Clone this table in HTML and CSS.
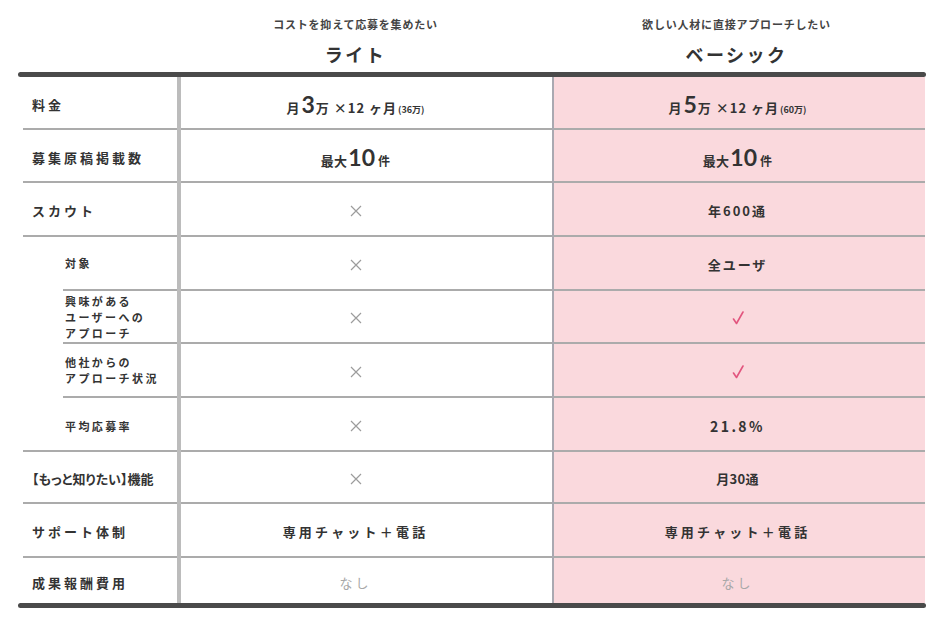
FILE: index.html
```html
<!DOCTYPE html>
<html lang="ja">
<head>
<meta charset="utf-8">
<title>プラン比較</title>
<link rel="stylesheet" href="styles.css">
</head>
<body>
<div class="wrap">
  <div class="head">
    <div class="h-light">
      <p class="sub">コストを抑えて応募を集めたい</p>
      <p class="plan">ライト</p>
    </div>
    <div class="h-basic">
      <p class="sub">欲しい人材に直接アプローチしたい</p>
      <p class="plan">ベーシック</p>
    </div>
  </div>
  <div class="bar"></div>
  <div class="grid">
    <div class="vline v1"></div>
    <div class="vline v2"></div>

    <div class="lab">料金</div>
    <div class="light"><span class="val price">月<span class="big">3</span>万 ×12 ヶ月<span class="tiny">(36万)</span></span></div>
    <div class="basic"><span class="val price">月<span class="big">5</span>万 ×12 ヶ月<span class="tiny">(60万)</span></span></div>

    <div class="lab">募集原稿掲載数</div>
    <div class="light"><span class="val">最大<span class="big">10</span><span class="ken">件</span></span></div>
    <div class="basic"><span class="val">最大<span class="big">10</span><span class="ken">件</span></span></div>

    <div class="lab">スカウト</div>
    <div class="light"><svg class="x" viewBox="0 0 12 12"><path d="M1 1 L11 11 M11 1 L1 11"/></svg></div>
    <div class="basic"><span class="val sp">年600通</span></div>

    <div class="lab sub-lab">対象</div>
    <div class="light"><svg class="x" viewBox="0 0 12 12"><path d="M1 1 L11 11 M11 1 L1 11"/></svg></div>
    <div class="basic"><span class="val sp">全ユーザ</span></div>

    <div class="lab sub-lab">興味がある<br>ユーザーへの<br>アプローチ</div>
    <div class="light"><svg class="x" viewBox="0 0 12 12"><path d="M1 1 L11 11 M11 1 L1 11"/></svg></div>
    <div class="basic"><svg class="chk" viewBox="0 0 12 14"><path d="M1.5 8 L4.5 12.5 L11 1"/></svg></div>

    <div class="lab sub-lab">他社からの<br>アプローチ状況</div>
    <div class="light"><svg class="x" viewBox="0 0 12 12"><path d="M1 1 L11 11 M11 1 L1 11"/></svg></div>
    <div class="basic"><svg class="chk" viewBox="0 0 12 14"><path d="M1.5 8 L4.5 12.5 L11 1"/></svg></div>

    <div class="lab sub-end">平均応募率</div>
    <div class="light"><svg class="x" viewBox="0 0 12 12"><path d="M1 1 L11 11 M11 1 L1 11"/></svg></div>
    <div class="basic"><span class="val num">21.8%</span></div>

    <div class="lab tight">【もっと知りたい】機能</div>
    <div class="light"><svg class="x" viewBox="0 0 12 12"><path d="M1 1 L11 11 M11 1 L1 11"/></svg></div>
    <div class="basic"><span class="val">月30通</span></div>

    <div class="lab">サポート体制</div>
    <div class="light"><span class="val wide">専用チャット＋電話</span></div>
    <div class="basic"><span class="val wide">専用チャット＋電話</span></div>

    <div class="lab last">成果報酬費用</div>
    <div class="light last"><span class="none">なし</span></div>
    <div class="basic last"><span class="none">なし</span></div>
  </div>
  <div class="bar"></div>
</div>
</body>
</html>
```

FILE: styles.css
```css
* { box-sizing: border-box; }
html, body { margin: 0; padding: 0; background: #fff; }
body {
  font-family: "Noto Sans CJK JP", "Noto Sans", sans-serif;
  color: #333;
}
.wrap {
  width: 907px;
  margin-left: 18px;
}
.head {
  display: grid;
  grid-template-columns: 163px 371px 373px;
  padding-top: 15px;
  height: 72px;
}
.h-light { grid-column: 2; padding-right: 22px; text-align: center; }
.h-basic { grid-column: 3; padding-right: 4px; text-align: center; }
.sub {
  margin: 0;
  font-size: 11px;
  line-height: 18px;
  font-weight: 700;
  letter-spacing: 0.8px;
  color: #444;
}
.plan {
  margin: 8px 0 0;
  font-size: 18px;
  line-height: 26px;
  font-weight: 700;
  letter-spacing: 2.5px;
  color: #333;
}
.bar {
  height: 5px;
  background: #4a4a4a;
  border-radius: 3px;
  width: 908px;
}
.grid {
  display: grid;
  grid-template-columns: 159px 4px 371px 2px 371px;
  grid-template-rows: 53px 53px 54px 54px 53px 54px 54px 52px 54px 45px;
}
.vline { grid-row: 1 / -1; }
.v1 { grid-column: 2; background: #bcbcbc; }
.v2 { grid-column: 4; background: #a9a9b1; }
.lab {
  grid-column: 1;
  margin-left: 5px;
  padding-left: 9px;
  padding-top: 3px;
  display: flex;
  align-items: center;
  border-bottom: 2px solid #ababab;
  font-size: 13px;
  font-weight: 700;
  letter-spacing: 3px;
  color: #333;
}
.sub-lab {
  margin-left: 45px;
  padding-left: 2px;
  padding-top: 0;
  font-size: 11px;
  line-height: 16px;
  letter-spacing: 2.4px;
}
.sub-end {
  padding-left: 42px;
  font-size: 11px;
  letter-spacing: 2.4px;
}
.tight {
  letter-spacing: 0;
  padding-left: 9px;
  font-size: 13px;
  font-feature-settings: "palt";
}
.light, .basic {
  display: flex;
  align-items: center;
  justify-content: center;
  padding-top: 3px;
  border-bottom: 2px solid #ababab;
}
.light { grid-column: 3; padding-right: 22px; }
.basic { grid-column: 5; background: #fad9dd; padding-right: 4px; }
.last { border-bottom: none; }
.val {
  font-size: 13px;
  font-weight: 700;
  color: #333;
  letter-spacing: 0.3px;
}
.price { letter-spacing: 1px; }
.big {
  font-family: "Lato", "Noto Sans", sans-serif;
  font-size: 23px;
  font-weight: 700;
  margin: 0 1px;
  letter-spacing: 0;
}
.ken { font-size: 12px; margin-left: 2px; }
.tiny { font-size: 9px; margin-left: 1px; letter-spacing: 0; }
.sp { letter-spacing: 2px; }
.num { letter-spacing: 2.4px; font-size: 14px; }
.wide { letter-spacing: 3.2px; }
.none {
  font-size: 13px;
  color: #a8a8a8;
  letter-spacing: 3px;
}
.x {
  width: 12px;
  height: 12px;
  fill: none;
  stroke: #9c9c9c;
  stroke-width: 1.2;
}
.chk {
  width: 12px;
  height: 14px;
  fill: none;
  stroke: #e2557e;
  stroke-width: 1.6;
  stroke-linecap: round;
  stroke-linejoin: round;
}
```
